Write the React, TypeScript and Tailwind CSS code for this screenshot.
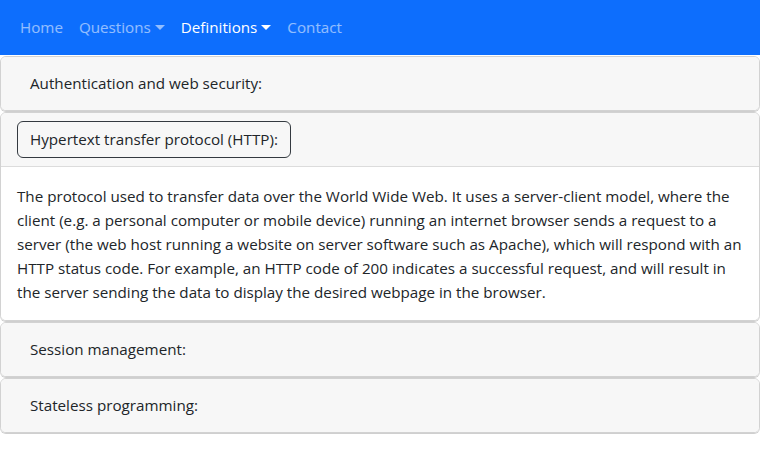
import { useState } from 'react';

const items = [
  { title: 'Authentication and web security:', body: '' },
  {
    title: 'Hypertext transfer protocol (HTTP):',
    body:
      'The protocol used to transfer data over the World Wide Web. It uses a server-client model, where the client (e.g. a personal computer or mobile device) running an internet browser sends a request to a server (the web host running a website on server software such as Apache), which will respond with an HTTP status code. For example, an HTTP code of 200 indicates a successful request, and will result in the server sending the data to display the desired webpage in the browser.',
  },
  { title: 'Session management:', body: '' },
  { title: 'Stateless programming:', body: '' },
];

function Caret() {
  return <span className="ml-1 inline-block h-0 w-0 border-x-[5px] border-t-[5px] border-x-transparent border-t-current align-middle" />;
}

export default function App() {
  const [open, setOpen] = useState(1);

  return (
    <div className="min-h-[461px] bg-white font-['Open_Sans',sans-serif] text-[15.2px] text-[#212529]">
      <nav className="flex h-[55px] items-center bg-[#0d6efd] px-3">
        <a className="px-2 text-white/55">Home</a>
        <a className="flex items-center px-2 text-white/55">
          Questions
          <Caret />
        </a>
        <a className="flex items-center px-2 text-white">
          Definitions
          <Caret />
        </a>
        <a className="px-2 text-white/55">Contact</a>
      </nav>

      <div className="flex flex-col gap-px pt-px">
        {items.map((item, i) => (
          <div key={item.title} className="overflow-hidden rounded-md border border-[#d2d2d2] shadow-[0_1px_0_#cfcfcf]">
            <div className="flex h-[53px] items-center bg-[#f7f7f7] px-4">
              <button
                type="button"
                onClick={() => setOpen(open === i ? -1 : i)}
                className={`h-[37px] rounded-md border px-3 text-left ${
                  open === i ? 'border-[#343a40]' : 'border-transparent'
                }`}
              >
                {item.title}
              </button>
            </div>
            {open === i && item.body && (
              <div className="border-t border-[#dcdcdc] bg-white px-4 pt-[17px] pb-4 leading-6">{item.body}</div>
            )}
          </div>
        ))}
      </div>
    </div>
  );
}
